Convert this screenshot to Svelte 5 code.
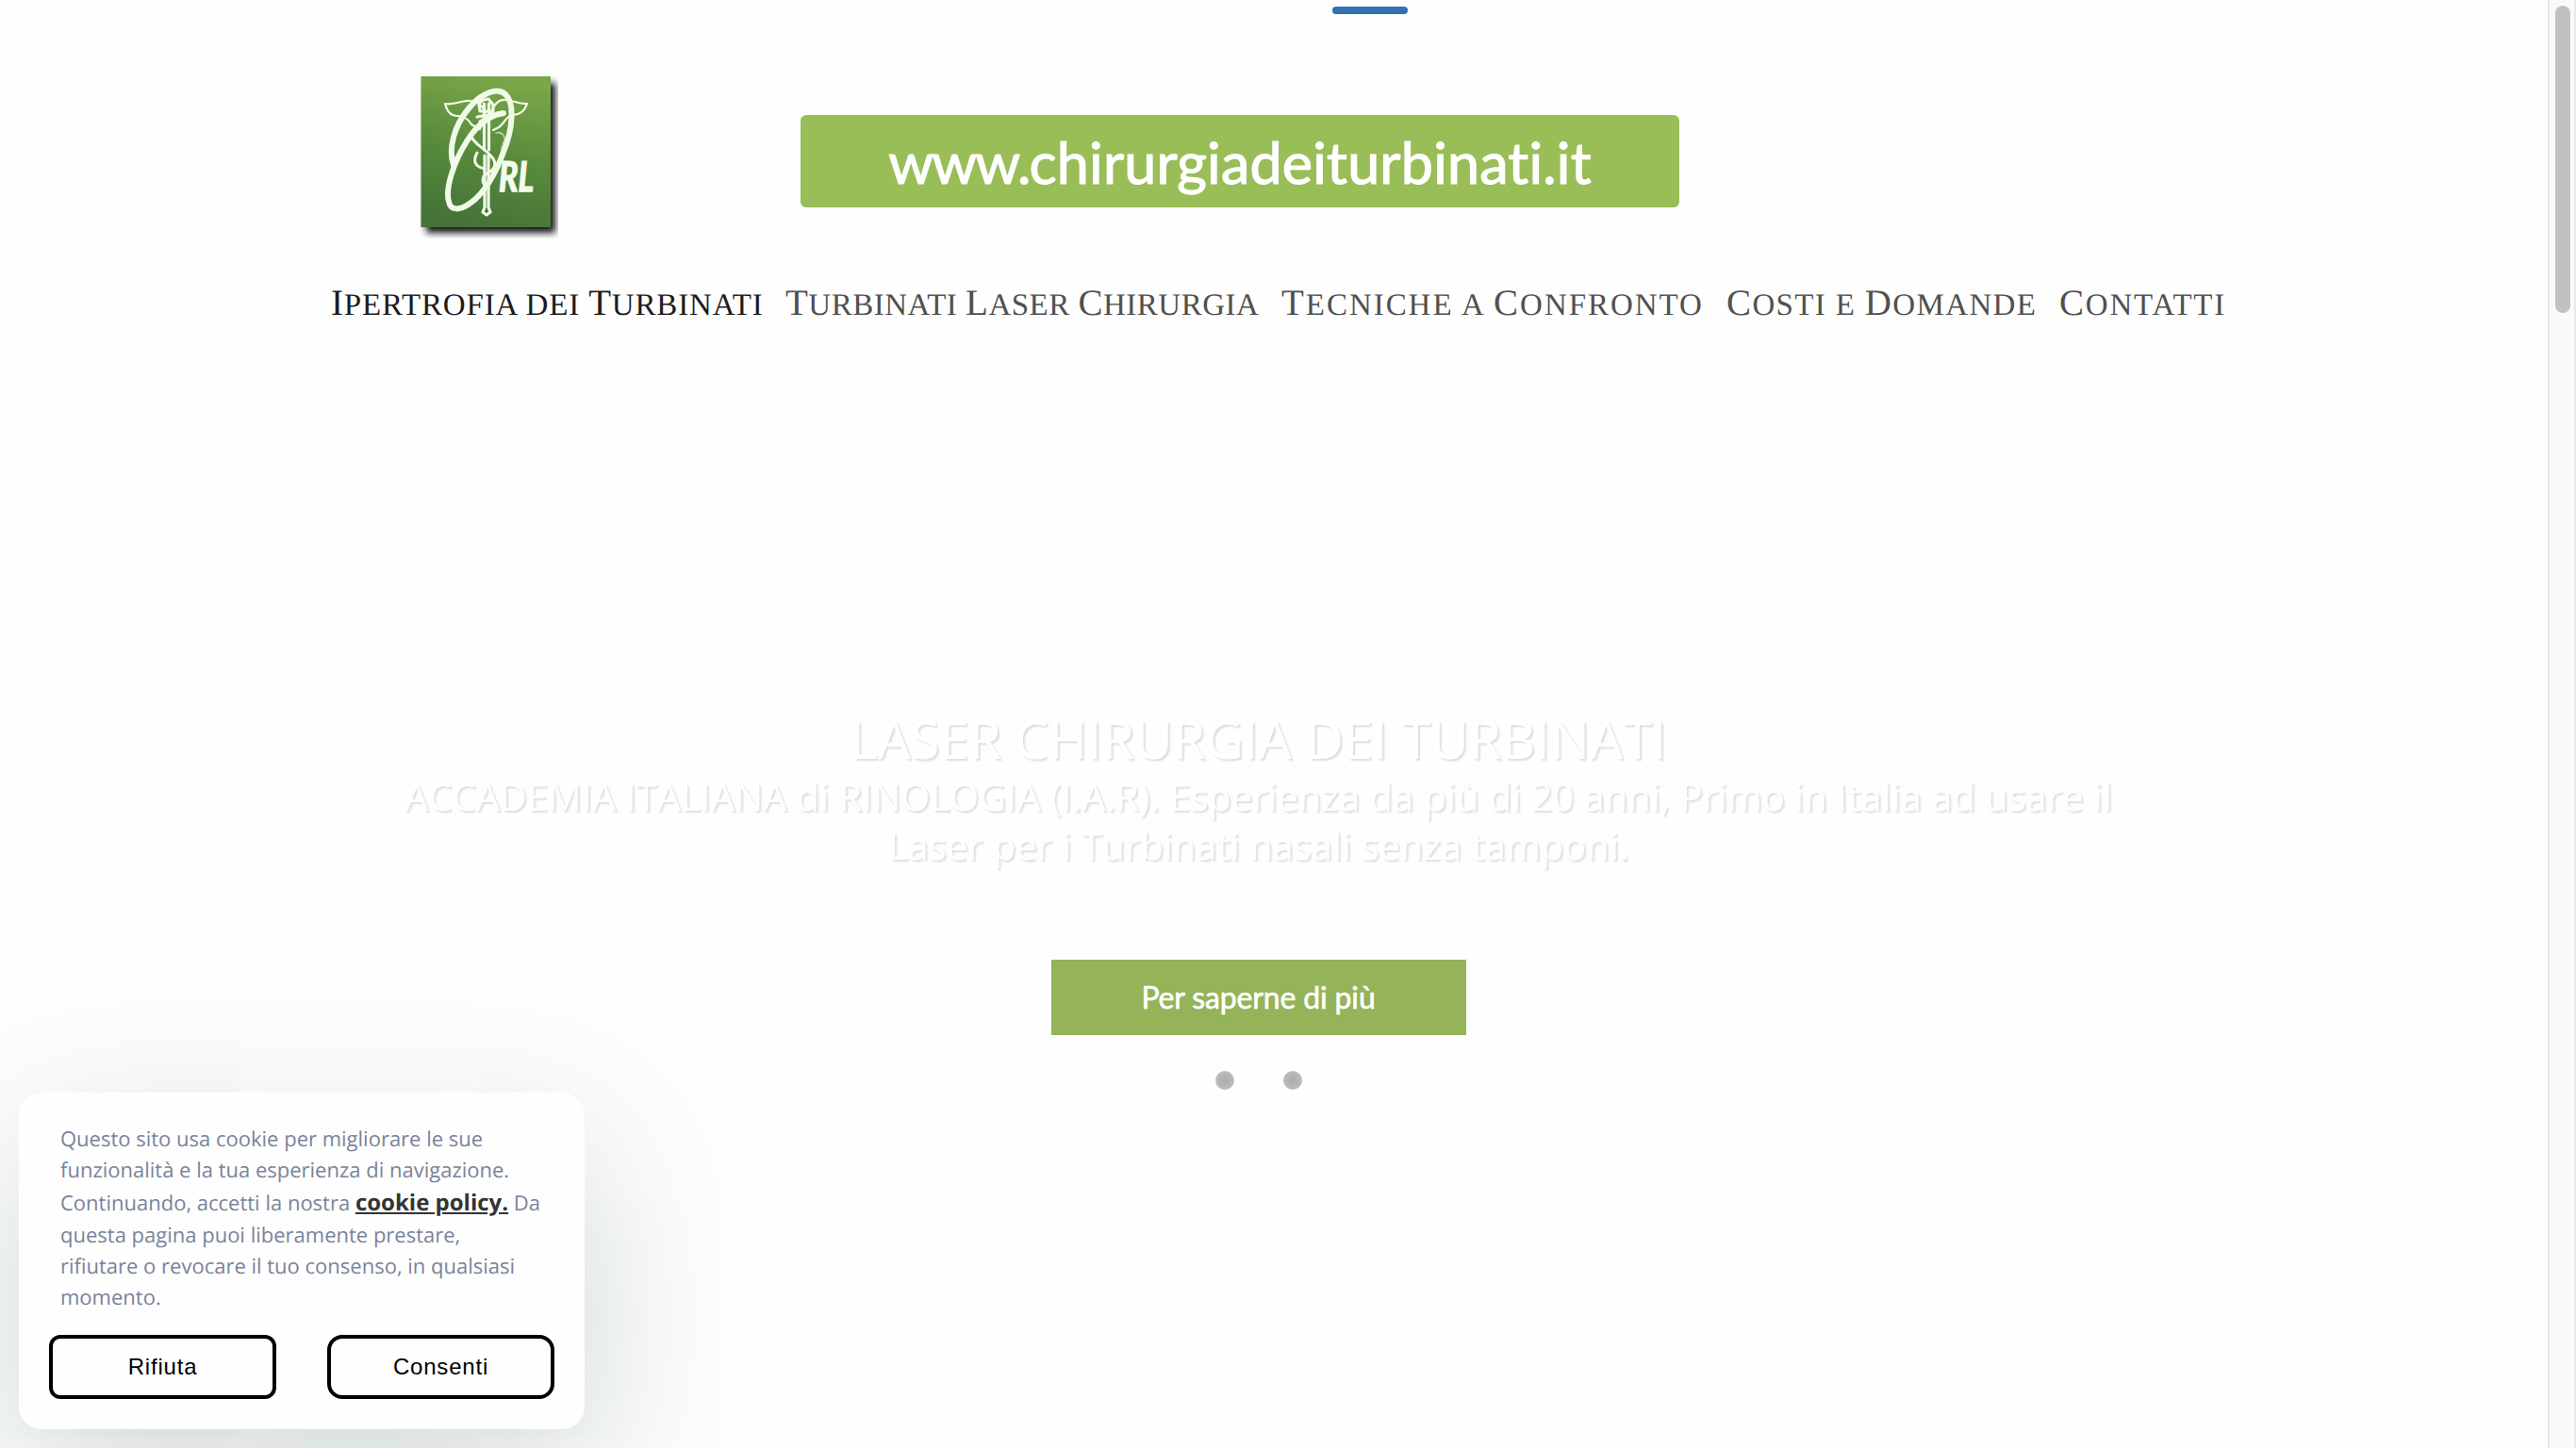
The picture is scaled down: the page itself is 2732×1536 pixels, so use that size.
<script>
  const nav = [
    { words: ['Ipertrofia', 'dei', 'Turbinati'], cls: 'n1' },
    { words: ['Turbinati', 'Laser', 'Chirurgia'], cls: 'n2' },
    { words: ['Tecniche', 'a', 'Confronto'], cls: 'n3' },
    { words: ['Costi', 'e', 'Domande'], cls: 'n4' },
    { words: ['Contatti'], cls: 'n5' }
  ];
  const isCap = (w) => w[0] !== w[0].toLowerCase();
</script>

<div class="page">
  <main>
    <div class="progress"></div>
    <header>
      <svg class="logo" viewBox="0 0 162 190" width="162" height="190" role="img" aria-label="ORL">
        <defs>
          <linearGradient id="green" x1="0.6" y1="0" x2="0.4" y2="1">
            <stop offset="0" stop-color="#7ba748" />
            <stop offset="0.5" stop-color="#588b3c" />
            <stop offset="1" stop-color="#457238" />
          </linearGradient>
          <filter id="soft" x="-20%" y="-20%" width="140%" height="140%">
            <feGaussianBlur stdDeviation="3.5" />
          </filter>
          <filter id="ink" x="-5%" y="-5%" width="110%" height="110%">
            <feGaussianBlur stdDeviation="0.5" />
          </filter>
        </defs>
        <rect x="22" y="25" width="137" height="159" fill="#181818" filter="url(#soft)" />
        <rect x="16.5" y="18" width="137.5" height="160" fill="url(#green)" />
        <g fill="none" stroke="#f0fae6" stroke-linecap="round" stroke-linejoin="round" filter="url(#ink)">
          <path stroke-width="6" d="M104 57C88 59 75 71 65 87C51 109 42 137 46 151C48 161 58 160 68 153C83 143 96 121 104 98C114 74 116 46 106 37C97 29 80 36 67 52C52 70 45 94 51 112" />
          <path stroke-width="2.2" d="M42 47C52 49 60 43 68 44C77 44 82 50 85 56M42 47C44 55 48 60 55 60C61 60 66 62 70 69L79 74M129 47C120 48 114 43 106 43C98 42 94 48 91 56M129 47C126 56 120 59 113 59C107 60 105 68 99 72L93 75" />
          <path stroke-width="3.2" d="M83.500 47V96M88.500 47V96M78 47L82 43L88 42L93 48V55H79ZM76 61L93 58L79 66M84 102V157M88 102V157M84 157L82 162L86 165L90 162L88 157" />
          <path stroke-width="3" d="M69 80C72 90 84 94 90 102C97 108 96 116 88 120C80 124 80 132 88 136M76 99C71 108 74 114 84 116" />
          <path stroke-width="1.6" opacity="0.6" d="M96 78C103 76 108 83 103 90M102 92C104 100 97 108 100 112" />
        </g>
        <text class="rl" x="99" y="140" textLength="37" lengthAdjust="spacingAndGlyphs">RL</text>
      </svg>
      <div class="banner"><span class="www">www.</span>chirurgiadeiturbinati.it</div>
    </header>

    <nav>
      {#each nav as item}
        <a class={item.cls} href="#top">{#each item.words as w, i}{#if i}{' '}{/if}{#if isCap(w)}<span class="cap">{w[0]}</span>{w.slice(1)}{:else}{w}{/if}{/each}</a>
      {/each}
    </nav>

    <section class="hero">
      <h1>LASER CHIRURGIA DEI TURBINATI</h1>
      <p>ACCADEMIA ITALIANA di RINOLOGIA (I.A.R). Esperienza da più di 20 anni, Primo in Italia ad usare il<br />Laser per i Turbinati nasali senza tamponi.</p>
      <button class="more">Per saperne di più</button>
      <div class="dots"><i></i><i></i></div>
    </section>
  </main>

  <aside class="track"><div class="thumb"></div></aside>

  <div class="cookie">
    <p>Questo sito usa cookie per migliorare le sue<br />funzionalità e la tua esperienza di navigazione.<br />Continuando, accetti la nostra <a href="#policy">cookie policy.</a> Da<br />questa pagina puoi liberamente prestare,<br />rifiutare o revocare il tuo consenso, in qualsiasi<br />momento.</p>
    <div class="actions">
      <button>Rifiuta</button>
      <button class="ok">Consenti</button>
    </div>
  </div>
</div>

<style>
  :global(body) { margin: 0; overflow: hidden; }
  .page {
    position: relative;
    display: flex;
    width: 2732px;
    height: 1536px;
    background: #fefefe;
    overflow: hidden;
    text-rendering: geometricPrecision;
  }
  main { width: 2702px; display: flex; flex-direction: column; }
  .progress {
    width: 80px;
    height: 8px;
    margin: 7px 0 0 1413px;
    border-radius: 4px;
    background: #3071b0;
  }
  header { display: flex; height: 190px; margin: 48px 0 0 430px; }
  .logo { display: block; flex: none; }
  .rl { font: italic 700 44px Lato, sans-serif; fill: #f4fcec; stroke: #f4fcec; stroke-width: 1.6px; }
  .banner {
    width: 932px;
    height: 98px;
    margin: 59px 0 0 257px;
    border-radius: 6px;
    background: #99be57;
    color: #fff;
    font: 400 61px/99px Lato, sans-serif;
    letter-spacing: 0.2px;
    -webkit-text-stroke: 1.2px #fff;
    text-align: center;
    white-space: nowrap;
  }
  .www { letter-spacing: -1.9px; }
  nav { display: flex; height: 60px; margin: 39px 0 0 351px; }
  nav a {
    flex: none;
    color: #505050;
    text-decoration: none;
    text-transform: uppercase;
    white-space: nowrap;
    font: 400 33px/60px "Liberation Serif", serif;
  }
  .cap { font-size: 39px; }
  .n1 { width: 482px; color: #1c1c1c; letter-spacing: 0.85px; }
  .n2 { width: 526px; letter-spacing: 0.5px; }
  .n3 { width: 472px; letter-spacing: 1.96px; }
  .n4 { width: 353px; letter-spacing: 1.35px; }
  .n5 { width: 180px; letter-spacing: 1.8px; }
  .hero {
    display: flex;
    flex-direction: column;
    align-items: center;
    width: 2669px;
    margin-top: 402px;
    color: #fff;
    font-family: "Open Sans", sans-serif;
    text-align: center;
    text-shadow: 2px 2px 2px rgba(0, 0, 0, 0.13);
  }
  h1 { margin: 0; font-size: 55.9px; font-weight: 400; line-height: 60px; white-space: nowrap; }
  .hero p { margin: 5px 0 0; font-size: 39.9px; line-height: 52px; white-space: nowrap; }
  .more {
    width: 440px;
    height: 80px;
    margin-top: 95px;
    padding: 0;
    border: 0;
    background: #95b359;
    color: #fff;
    font: 400 32px/80px Lato, sans-serif;
    letter-spacing: -0.15px;
    -webkit-text-stroke: 0.6px #fff;
    text-shadow: none;
  }
  .dots { display: flex; gap: 52px; margin-top: 38px; }
  .dots i {
    width: 20px;
    height: 20px;
    border-radius: 50%;
    background: radial-gradient(circle, #b0b0b0 20%, #bebebe 75%);
  }
  .track {
    box-sizing: border-box;
    width: 30px;
    padding: 6px 4px 0 6px;
    border: solid #e8e8e8;
    border-width: 0 2px;
    background: #fafafa;
  }
  .thumb { width: 16px; height: 326px; border-radius: 8px; background: #c1c1c1; }
  .cookie {
    position: absolute;
    left: 20px;
    bottom: 20px;
    display: flex;
    flex-direction: column;
    justify-content: space-between;
    box-sizing: border-box;
    width: 600px;
    height: 357px;
    padding: 33px 32px 32px;
    border-radius: 24px;
    background: #fefefe;
    box-shadow: 0 60px 180px rgba(50, 84, 92, 0.23);
  }
  .cookie p {
    margin: 0 0 0 12px;
    color: #79849a;
    font: 400 22px/1.5 "Open Sans", sans-serif;
    white-space: nowrap;
  }
  .cookie p a { color: #333; font-size: 24px; font-weight: 700; }
  .actions { display: flex; justify-content: space-between; }
  .actions button {
    box-sizing: border-box;
    width: 241px;
    height: 68px;
    border: 4px solid #000;
    border-radius: 12px;
    background: transparent;
    color: #000;
    font: 400 24px "Liberation Sans", sans-serif;
    letter-spacing: 0.8px;
  }
  .actions .ok { border-radius: 16px; }
</style>
